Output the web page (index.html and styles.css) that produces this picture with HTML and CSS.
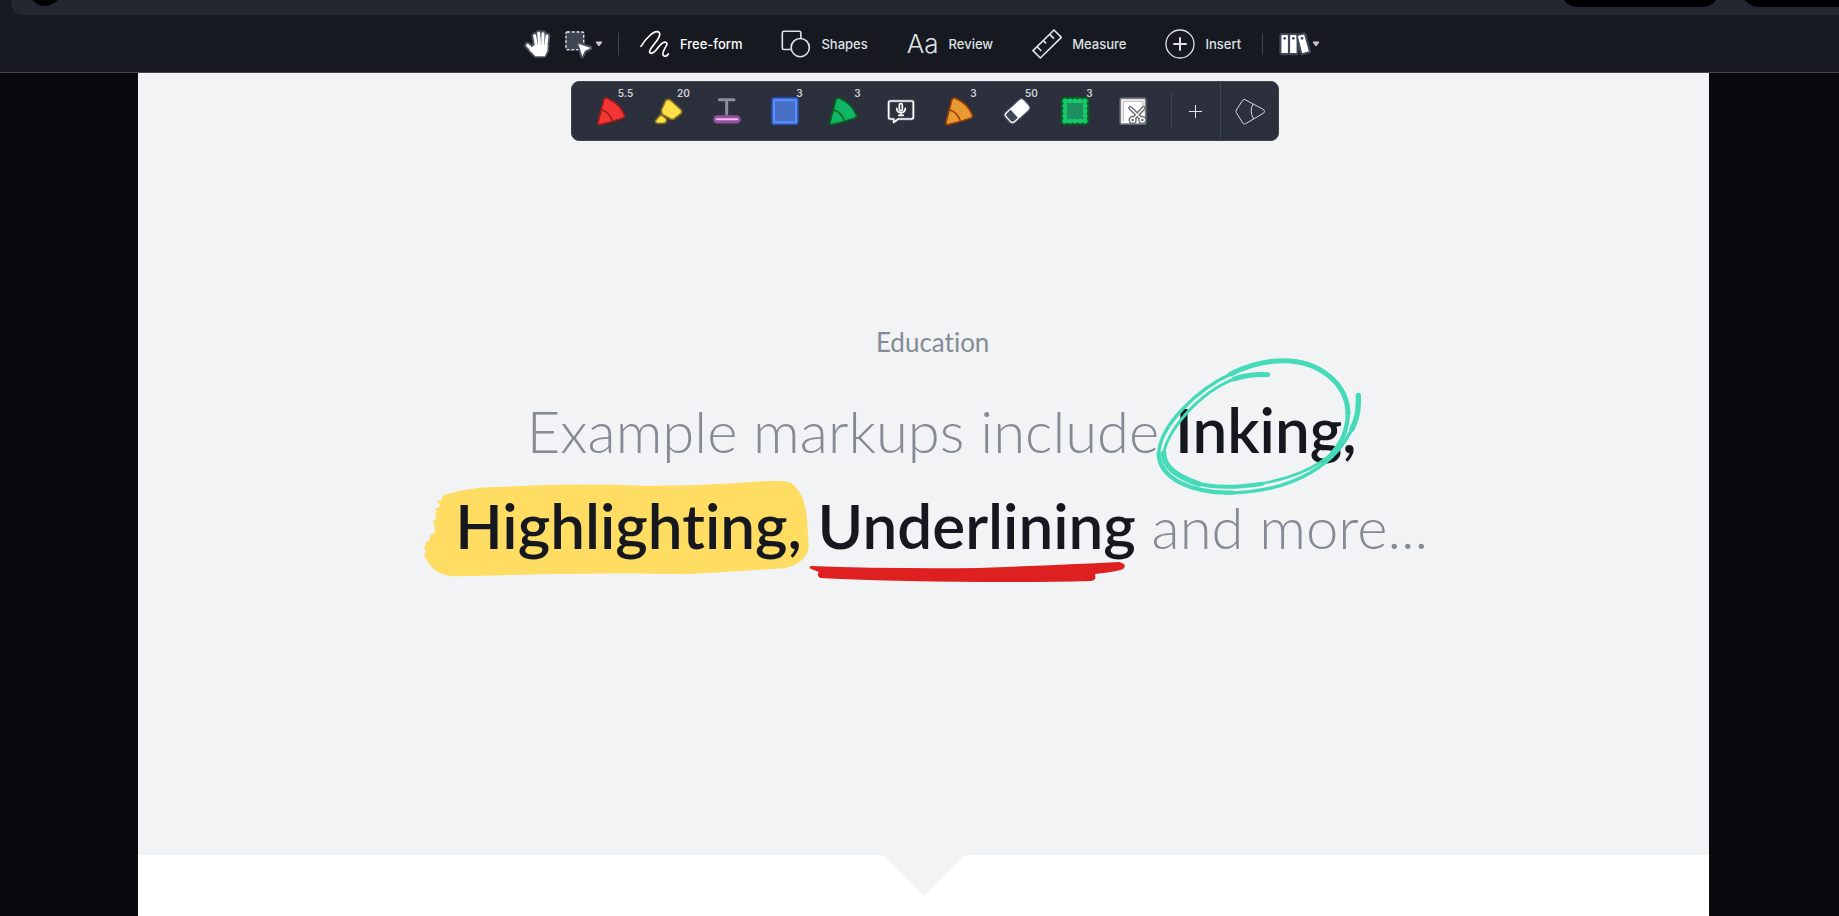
FILE: index.html
```html
<!DOCTYPE html>
<html lang="en">
<head>
<meta charset="utf-8">
<title>Education</title>
<link rel="stylesheet" href="styles.css">
</head>
<body>
<header class="top">
  <div class="tabs">
    <span class="avatar"></span>
    <span class="pill"></span>
    <span class="pill pill-end"></span>
  </div>
  <nav class="tools" aria-label="Tools">
    <button class="tool hand" aria-label="Pan">
      <svg width="28" height="30" viewBox="40 62 84 90" stroke-linecap="round" stroke-linejoin="round">
        <g stroke="#4b5361" fill="#4b5361"><path stroke-width="20" fill="none" d="M72 82l6 34M84 75l3 38M97 76l-1 38M109 83l-4 34M51 111l16 16"/><path stroke-width="12" d="M64 112H110L109 128L101 142H74L58 126Z"/></g>
        <g stroke="#fff" fill="#fff"><path stroke-width="9" fill="none" d="M72 82l6 34M84 75l3 38M97 76l-1 38M109 83l-4 34M51 111l16 16"/><path stroke-width="4" d="M72 112H109L108 128L101 142H76L58 124Z"/></g>
      </svg>
    </button>
    <button class="tool select" aria-label="Select">
      <svg width="28" height="28" viewBox="164 62 84 84"><rect x="168" y="66" width="58" height="58" rx="5" fill="#3d4553"/><rect x="170" y="68" width="53" height="53" rx="4" fill="none" stroke="#e3e5e8" stroke-width="4" stroke-dasharray="8 6"/><path d="M207 103L244 116L227 124L219 141Z" fill="#fff" stroke="#4b5361" stroke-width="12" stroke-linejoin="round" paint-order="stroke"/></svg>
      <svg class="caret" width="8" height="6" viewBox="0 0 8 6"><path d="M1 1H7L4 5Z" fill="#ccc" stroke="#ccc" stroke-linejoin="round"/></svg>
    </button>
    <span class="rule"></span>
    <button class="tool active">
      <svg width="30" height="28" viewBox="388 57 90 84" fill="none" stroke="#fff" stroke-width="5" stroke-linecap="round"><path d="M391 106C408 78 429 62 438 62C453 62 448 77 435 94C422 111 410 124 421 127C433 128 440 110 450 101C461 89 473 93 467 104C461 115 451 129 459 134C465 137 470 134 473 129"/></svg>
      <span>Free-form</span>
    </button>
    <button class="tool">
      <svg width="30" height="28" viewBox="63 57 90 86" fill="none" stroke="#dfe1e4" stroke-width="5"><path d="M93 117H71Q66 117 66 112V66Q66 61 71 61H118Q123 61 123 66V82"/><circle cx="121" cy="111" r="28"/></svg>
      <span>Shapes</span>
    </button>
    <button class="tool"><span class="aa" aria-hidden="true">Aa</span><span>Review</span></button>
    <button class="tool">
      <svg width="30" height="30" viewBox="69 54 90 90" fill="none" stroke="#dfe1e4" stroke-width="5" stroke-linejoin="round"><path d="M135 57L157 79L94 141L72 119ZM84 107L97 120M103 89L111 97M122 70L135 83"/></svg>
      <span>Measure</span>
    </button>
    <button class="tool">
      <svg width="30" height="30" viewBox="471 54 90 90" fill="none" stroke="#dfe1e4" stroke-width="4" stroke-linecap="round"><circle cx="516" cy="99" r="42"/><path stroke-width="6" d="M498 99H534M516 81V117"/></svg>
      <span>Insert</span>
    </button>
    <span class="rule"></span>
    <button class="tool library" aria-label="Library">
      <svg width="32" height="24" viewBox="812 67 96 72"><g fill="#fff" stroke="#3f4958" stroke-width="14" stroke-linejoin="round" paint-order="stroke"><path d="M820 77H838V130H820Z"/><path d="M846 77H864V130H846Z"/><path d="M869 79L887 75L901 125L882 130Z"/></g><g fill="#fff"><path d="M820 77H838V130H820ZM846 77H864V130H846ZM869 79L887 75L901 125L882 130Z"/></g><g fill="#3f4958"><circle cx="829" cy="86" r="4"/><circle cx="855" cy="86" r="4"/><circle cx="881" cy="86" r="4"/></g></svg>
      <svg class="caret" width="8" height="6" viewBox="0 0 8 6"><path d="M1 1H7L4 5Z" fill="#ccc" stroke="#ccc" stroke-linejoin="round"/></svg>
    </button>
  </nav>
</header>

<main class="desk">
  <div class="page">
    <div class="dock" role="toolbar" aria-label="Presets">
      <button class="preset" aria-label="Red pen"><svg width="30" height="30" viewBox="108 62 90 90" fill="#f23535" stroke="#a51b18" stroke-width="5" stroke-linejoin="round"><path d="M132 72Q135 66 142 69Q179 85 193 119Q195 125 189 128Q159 139 120 148Q113 148 114 141Z"/><path fill="none" d="M126 104Q147 110 157 136"/></svg><span class="size">5.5</span></button>
      <button class="preset" aria-label="Yellow highlighter"><svg width="30" height="30" viewBox="283 62 90 90" fill="#ffdf4a" stroke="#82701f" stroke-width="5" stroke-linejoin="round"><path d="M318 75Q325 69 334 75L365 104Q369 110 363 116L343 131Q335 135 326 127L309 118Q304 114 305 104Z"/><path d="M303 118L320 130Q323 136 317 143Q302 146 290 143Q284 140 289 134Z"/></svg><span class="size">20</span></button>
      <button class="preset" aria-label="Underline"><svg width="30" height="30" viewBox="456 62 90 90" stroke-linecap="round"><path d="M478 73H522M500 75V116" stroke="#8b909b" stroke-width="9"/><path d="M472 132H530" stroke="#8f529c" stroke-width="25"/><path d="M470 132H532" stroke="#ffb5ff" stroke-width="6"/></svg></button>
      <button class="preset" aria-label="Blue rectangle"><svg width="30" height="30" viewBox="630 62 90 90"><rect x="634" y="66" width="82" height="83" rx="7" fill="#2b57b5"/><rect x="642" y="74" width="66" height="67" rx="1" fill="#476dc4" stroke="#588cff" stroke-width="7"/></svg><span class="size">3</span></button>
      <button class="preset" aria-label="Green pen"><svg width="30" height="30" viewBox="108 62 90 90" fill="#10b565" stroke="#07651e" stroke-width="5" stroke-linejoin="round"><path d="M132 72Q135 66 142 69Q179 85 193 119Q195 125 189 128Q159 139 120 148Q113 148 114 141Z"/><path fill="none" d="M126 104Q147 110 157 136"/></svg><span class="size">3</span></button>
      <button class="preset" aria-label="Voice comment"><svg width="30" height="30" viewBox="259 62 90 90" fill="none" stroke="#fff" stroke-width="5" stroke-linecap="round" stroke-linejoin="round"><path stroke="#4a5260" stroke-width="10" d="M272 77H336Q341 77 341 82V126Q341 131 336 131H296L282 141V131H272Q267 131 267 126V82Q267 77 272 77Z"/><path d="M272 77H336Q341 77 341 82V126Q341 131 336 131H296L282 141V131H272Q267 131 267 126V82Q267 77 272 77Z"/><rect x="299" y="85" width="9" height="21" rx="4"/><path d="M291 99Q292 112 304 112Q316 112 317 99M304 112V120M297 120H311"/></svg></button>
      <button class="preset" aria-label="Orange pen"><svg width="30" height="30" viewBox="108 62 90 90" fill="#e99a31" stroke="#9b3d08" stroke-width="5" stroke-linejoin="round"><path d="M132 72Q135 66 142 69Q179 85 193 119Q195 125 189 128Q159 139 120 148Q113 148 114 141Z"/><path fill="none" d="M126 104Q147 110 157 136"/></svg><span class="size">3</span></button>
      <button class="preset" aria-label="Eraser"><svg width="30" height="30" viewBox="606 62 90 90"><g transform="rotate(-42 651 108)"><rect x="612" y="86" width="78" height="44" rx="12" fill="#fff" stroke="#444c5a" stroke-width="4"/><path d="M640 92V124H625Q618 124 618 116V100Q618 92 625 92Z" fill="#3f4755"/></g></svg><span class="size">50</span></button>
      <button class="preset" aria-label="Green cloud"><svg width="30" height="30" viewBox="60 62 90 90" fill="none" stroke-linecap="round"><rect x="75" y="77" width="60" height="60" stroke="#07631f" stroke-width="19"/><rect x="75" y="77" width="60" height="60" stroke="#07631f" stroke-width="26" stroke-dasharray="0 15"/><rect x="75" y="77" width="60" height="60" fill="#1e9060" stroke="#16c96d" stroke-width="8"/><rect x="75" y="77" width="60" height="60" stroke="#16c96d" stroke-width="15" stroke-dasharray="0 15"/><rect x="82" y="84" width="46" height="46" fill="#1e9060"/></svg><span class="size">3</span></button>
      <button class="preset" aria-label="Snip"><svg width="30" height="30" viewBox="233 62 90 90" fill="none" stroke-linecap="round"><rect x="240" y="69" width="76" height="77" rx="4" fill="#fff" stroke="#7b7c80" stroke-width="5"/><path d="M249 137V78H308V92" stroke="#c8c2ce" stroke-width="4"/><g stroke="#6f7177" stroke-width="13"><path d="M270 98L303 130M310 98L280 130"/><circle cx="277" cy="134" r="6"/><circle cx="306" cy="134" r="6"/></g><g stroke="#fff" stroke-width="4"><path d="M270 98L303 130M310 98L280 130"/><circle cx="277" cy="134" r="6" fill="#6f7177"/><circle cx="306" cy="134" r="6" fill="#6f7177"/></g></svg></button>
      <span class="rule rule-dock"></span>
      <button class="add" aria-label="Add preset"><svg width="13" height="13" viewBox="0 0 13 13" stroke="#e3e5e8" stroke-width="1"><path d="M0 6.5H13M6.5 0V13"/></svg></button>
      <button class="pen" aria-label="Pen settings"><svg width="32" height="30" viewBox="580 66 96 90" fill="none" stroke="#d5d7db" stroke-width="3" stroke-linejoin="round"><path d="M618 78L672 107Q678 112 672 117L618 149Q613 152 610 148L590 116Q588 112 590 108L609 79Q613 74 618 78ZM640 90Q628 112 642 135"/></svg></button>
    </div>

    <section class="slide">
      <p class="eyebrow">Education</p>
      <h1 class="headline">
        <span class="line">Example markups include <strong class="mark">Inking,<svg class="ink" width="280" height="180" viewBox="0 0 840 540" fill="none" stroke="#45dab8" stroke-linecap="round"><path stroke-width="16" d="M718 196C719 240 715 265 699 297"/><path stroke-width="10" d="M704 285C660 390 540 488 318 489"/><path stroke-width="13" d="M340 488C220 490 120 447 119 370"/><path stroke-width="10" d="M119 374C120 290 230 180 340 130"/><path stroke-width="15" d="M335 132C380 110 430 92 494 92C600 92 686 160 687 252"/><path stroke-width="13" d="M687 246C686 295 672 335 640 368"/><path stroke-width="8" d="M645 363C600 412 510 448 415 463"/><path stroke-width="12" d="M430 461C350 474 270 473 216 455"/><path stroke-width="16" d="M240 462C180 442 133 412 134 369"/><path stroke-width="9" d="M134 376C136 315 232 190 350 145"/><path stroke-width="15" d="M345 147C375 137 400 132 446 134"/></svg></strong></span>
        <span class="line"><strong class="mark"><svg class="swipe" width="385" height="96" viewBox="44 60 1155 288"><path fill="#ffdc62" d="M99 104Q175 77 290 77Q490 66 700 74Q870 75 1030 63C1140 56 1148 61 1163 84C1190 115 1192 150 1198 254C1198 288 1165 315 1120 322Q960 333 840 339Q550 334 140 346C75 344 60 310 44 282L51 271L45 263L49 246L61 237L63 223L76 217V190L69 181L81 175L77 156L85 153L76 144L94 136L83 119L98 118Z"/></svg><span class="word">Highlighting,</span></strong> <strong class="mark">Underlining<svg class="under" width="318" height="20" viewBox="0 0 318 20"><path fill="#df2020" d="M2 4Q80 7 170 6Q250 3 310 0Q318 2 315 6Q314 9 286 12Q288 19 281 19Q200 21 100 19Q50 18 11 16Q7 13 10 10L2 7Q-1 5 2 4Z"/></svg></strong> and more...</span>
      </h1>
    </section>
    <svg class="notch" width="82" height="41" viewBox="0 0 82 41"><path fill="#f1f3f5" d="M0 0H82L41 41Z"/></svg>
  </div>
</main>
</body>
</html>
```

FILE: styles.css
```css
* { box-sizing: border-box; }

body {
  margin: 0;
  min-height: 100vh;
  display: flex;
  flex-direction: column;
  overflow: hidden;
  background: #090a0e;
  color: #dfe1e4;
  font-family: Inter, "Liberation Sans", sans-serif;
}

button {
  border: 0;
  padding: 0;
  background: none;
  color: inherit;
  font: inherit;
}

svg { display: block; flex: none; }

.top {
  background: #161920;
  border-bottom: 1px solid #444c58;
}

.tabs {
  height: 15px;
  margin-left: 11px;
  display: flex;
  overflow: hidden;
  background: #23272f;
  border-bottom-left-radius: 10px 16px;
}

.avatar {
  width: 32px;
  height: 32px;
  margin: -26px auto 0 18px;
  border-radius: 50%;
  background: #000;
}

.pill {
  width: 160px;
  height: 36px;
  margin: -29px 21px 0 0;
  border-radius: 18px;
  background: #000;
}

.pill-end {
  width: 98px;
  margin-right: 0;
  border-radius: 18px 0 0 18px;
}

.tools {
  height: 57px;
  display: flex;
  align-items: center;
  justify-content: center;
  padding-left: 5px;
  font-size: 13px;
  font-weight: 500;
}

.tool {
  display: flex;
  align-items: center;
  gap: 10px;
  margin-right: 39px;
}

.active { color: #fff; }
.hand { margin-right: 12px; }
.select { gap: 3px; margin-right: 15px; }
.library { gap: 1px; margin-right: 0; }

.aa {
  font-size: 26px;
  font-weight: 300;
  line-height: 28px;
}

.rule {
  width: 1px;
  height: 22px;
  margin-right: 21px;
  background: #3e4552;
}

.tool + .rule:nth-last-child(2) {
  margin: 0 16px 0 -18px;
}

.desk {
  flex: 1;
  display: flex;
  padding: 0 7.05% 0 7.5%;
}

.page {
  flex: 1;
  display: flex;
  flex-direction: column;
  align-items: center;
  background: #fff;
}

.dock {
  position: absolute;
  top: 81px;
  left: 50%;
  margin-left: -349px;
  display: flex;
  align-items: center;
  height: 60px;
  padding-left: 10px;
  border: 1px solid #3c434f;
  border-radius: 8px;
  background: #2b303c;
}

.preset {
  position: relative;
  width: 58px;
  height: 58px;
  display: grid;
  place-items: center;
}

.size {
  position: absolute;
  top: 5px;
  left: 29px;
  width: 30px;
  font-size: 10px;
  font-weight: 600;
  line-height: 12px;
  text-align: center;
  color: #cfd2d7;
}

.rule-dock {
  height: 36px;
  margin: 0 0 0 9px;
}

.add {
  width: 48px;
  height: 58px;
  display: grid;
  place-items: center;
}

.pen {
  width: 58px;
  height: 58px;
  display: grid;
  place-items: center;
  border-left: 1px solid #3e4552;
}

.slide {
  align-self: stretch;
  height: 782px;
  padding-top: 251px;
  background: #f1f3f5;
  color: #858b94;
  font-family: Lato, "Open Sans", sans-serif;
  font-variant-ligatures: none;
  text-align: center;
}

.eyebrow {
  margin: 0;
  padding-left: 18px;
  font-size: 26px;
  line-height: 36px;
}

.headline {
  margin: 22px 0 0;
  padding-left: 36px;
  font-size: 58px;
  font-weight: 300;
  line-height: 95px;
  white-space: nowrap;
}

.line { display: block; }

.mark {
  position: relative;
  color: #15181f;
  font-size: 62px;
  font-weight: 600;
}

.word { position: relative; }

.ink {
  position: absolute;
  top: -62px;
  left: -56px;
}

.swipe {
  position: absolute;
  top: -7px;
  left: -31px;
}

.under {
  position: absolute;
  top: 74px;
  left: -9px;
}

.notch { flex: none; }
```
